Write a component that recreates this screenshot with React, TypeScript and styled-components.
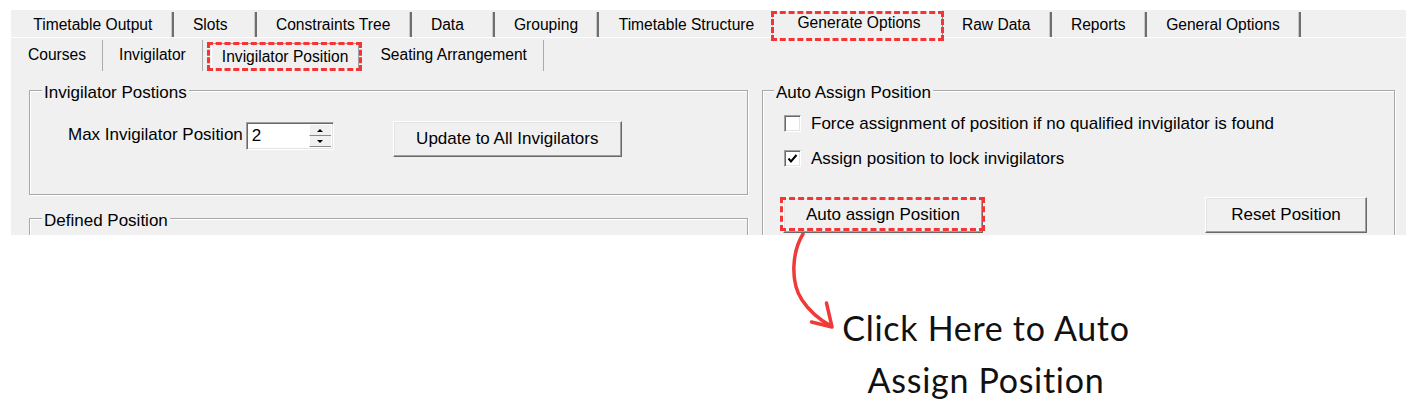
import React from "react";
import styled, { createGlobalStyle, css } from "styled-components";

const GlobalStyle = createGlobalStyle`
  html, body { margin: 0; padding: 0; background: #ffffff; }
  body { font-family: "Liberation Sans", Arial, sans-serif; }
`;

const Page = styled.div`
  width: 1416px;
  height: 415px;
  box-sizing: border-box;
  padding: 10px 0 0 11px;
  overflow: hidden;
`;

const Window = styled.div`
  width: 1395px;
  height: 225px;
  background: #f0f0f0;
  overflow: hidden;
  display: flex;
  flex-direction: column;
  font-family: "Liberation Sans", Arial, sans-serif;
  font-size: 17px;
  color: #000;
`;

const Highlight = styled.span<{ $inset: string }>`
  position: absolute;
  inset: ${(p) => p.$inset};
  border: 3px dashed #f53535;
  pointer-events: none;
  z-index: 2;
`;

const TopTabs = styled.div`
  flex: none;
  display: flex;
  height: 27px;
  padding-left: 3px;
  border-bottom: 1px solid #ffffff;
`;

const TopTab = styled.div<{ $selected?: boolean }>`
  position: relative;
  box-sizing: border-box;
  min-width: 83px;
  margin-top: 2px;
  padding: 1px 19.3px 0;
  display: flex;
  align-items: center;
  white-space: nowrap;
  font-size: 15.6px;
  border-right: 2px solid #6e6e6e;
  box-shadow: inset -1px 0 0 #c8c8c8;
  ${(p) =>
    p.$selected &&
    css`
      margin: 0 0 -4px -2px;
      height: 31px;
      padding: 0 21px 6px 23px;
      border-right: 1px solid #8a8a8a;
      border-left: 1px solid #ffffff;
      border-top: 1px solid #ffffff;
      box-shadow: none;
      background: #f0f0f0;
      z-index: 1;
    `}
`;

const SubTabs = styled.div`
  flex: none;
  display: flex;
  height: 33px;
  padding-left: 1px;
`;

const SubTab = styled.div<{ $selected?: boolean }>`
  position: relative;
  margin-top: 2px;
  padding: 0 16px 1px;
  display: flex;
  align-items: center;
  white-space: nowrap;
  font-size: 15.6px;
  border-right: 1px solid #ababab;
  ${(p) =>
    p.$selected &&
    css`
      margin: 5px 5px 0 8px;
      padding: 0 10px 2px;
      border-top: 1px solid #a0a0a0;
      border-left: 1px solid #ffffff;
      border-right: 1px solid #a0a0a0;
    `}
`;

const Body = styled.div`
  flex: 1;
  display: flex;
  align-items: flex-start;
  gap: 14px;
  padding: 19px 0 0 18px;
`;

const LeftCol = styled.div`
  width: 719px;
  display: flex;
  flex-direction: column;
  gap: 23px;
`;

const GroupBox = styled.div<{ $w?: number; $h: number }>`
  box-sizing: border-box;
  width: ${(p) => (p.$w ? `${p.$w}px` : "100%")};
  height: ${(p) => p.$h}px;
  border: 1px solid #a8a8a8;
  box-shadow: inset 1px 1px 0 #ffffff, 1px 1px 0 #ffffff;
  display: flex;
  flex-direction: column;
  align-items: flex-start;
`;

const Legend = styled.div<{ $left: number }>`
  margin: -7px 0 0 ${(p) => p.$left}px;
  padding: 0 2px;
  line-height: 18px;
  background: #f0f0f0;
  white-space: nowrap;
`;

const FieldRow = styled.div`
  display: flex;
  align-items: flex-start;
  margin-top: 19px;
  padding-left: 38px;
`;

const FieldLabel = styled.span`
  margin-top: 5px;
  line-height: 18px;
  white-space: nowrap;
`;

const Spinner = styled.div`
  box-sizing: border-box;
  display: flex;
  width: 88px;
  height: 28px;
  margin: 1px 0 0 3px;
  border: 1px solid;
  border-color: #a0a0a0 #ffffff #ffffff #a0a0a0;
  box-shadow: inset 1px 1px 0 #696969, inset -1px -1px 0 #e3e3e3;
  background: #ffffff;
`;

const SpinValue = styled.div`
  flex: 1;
  padding-left: 5px;
  line-height: 26px;
  font-size: 17px;
`;

const SpinButtons = styled.div`
  width: 22px;
  display: flex;
  flex-direction: column;
  margin: 2px 2px 2px 0;
`;

const SpinButton = styled.div`
  flex: 1;
  display: flex;
  align-items: center;
  justify-content: center;
  background: #f0f0f0;
  border-bottom: 1px solid #8a8a8a;
  border-left: 1px solid #ffffff;
`;

const Triangle = styled.span<{ $down?: boolean }>`
  width: 0;
  height: 0;
  border-left: 3px solid transparent;
  border-right: 3px solid transparent;
  ${(p) =>
    p.$down
      ? css`border-top: 3px solid #000;`
      : css`border-bottom: 3px solid #000;`}
`;

const WinButton = styled.button<{ $w: number; $ml?: number }>`
  position: relative;
  box-sizing: border-box;
  width: ${(p) => p.$w}px;
  height: 36px;
  margin-left: ${(p) => p.$ml ?? 0}px;
  padding: 0;
  display: flex;
  align-items: center;
  justify-content: center;
  font-family: inherit;
  font-size: 17px;
  color: #000;
  background: #f0f0f0;
  border: 1px solid;
  border-color: #ffffff #696969 #696969 #ffffff;
  box-shadow: inset -1px -1px 0 #a0a0a0, inset 1px 1px 0 #e3e3e3;
  white-space: nowrap;
`;

const CheckRow = styled.div<{ $mt: number }>`
  display: flex;
  align-items: center;
  gap: 10px;
  margin-top: ${(p) => p.$mt}px;
  padding-left: 21px;
  height: 17px;
  white-space: nowrap;
`;

const CheckBox = styled.span`
  box-sizing: border-box;
  width: 17px;
  height: 17px;
  display: flex;
  align-items: center;
  justify-content: center;
  background: #ffffff;
  border: 1px solid;
  border-color: #a0a0a0 #ffffff #ffffff #a0a0a0;
  box-shadow: inset 1px 1px 0 #696969, inset -1px -1px 0 #e3e3e3;
`;

const ButtonRow = styled.div`
  align-self: stretch;
  display: flex;
  justify-content: space-between;
  margin-top: 30px;
  padding: 0 27px 0 20px;
`;

const Callout = styled.div`
  display: flex;
  align-items: flex-start;
  margin-left: 779px;
`;

const Arrow = styled.svg`
  flex: none;
  margin-top: -3px;
  overflow: visible;
`;

const CalloutText = styled.div`
  width: 300px;
  margin: 67px 0 0 -4px;
  font-family: Lato, "Open Sans", sans-serif;
  font-size: 34px;
  font-weight: 400;
  letter-spacing: 0.7px;
  line-height: 52px;
  text-align: center;
  color: #111;
  white-space: nowrap;
`;

const topTabs = [
  "Timetable Output",
  "Slots",
  "Constraints Tree",
  "Data",
  "Grouping",
  "Timetable Structure",
  "Generate Options",
  "Raw Data",
  "Reports",
  "General Options",
];

const subTabs = ["Courses", "Invigilator", "Invigilator Position", "Seating Arrangement"];

export default function App() {
  return (
    <>
      <GlobalStyle />
      <Page>
        <Window>
          <TopTabs>
            {topTabs.map((t) => (
              <TopTab key={t} $selected={t === "Generate Options"}>
                {t}
                {t === "Generate Options" && <Highlight $inset="0 -2px 0 -3px" />}
              </TopTab>
            ))}
          </TopTabs>
          <SubTabs>
            {subTabs.map((t) => (
              <SubTab key={t} $selected={t === "Invigilator Position"}>
                {t}
                {t === "Invigilator Position" && <Highlight $inset="-2px -4px 0 -5px" />}
              </SubTab>
            ))}
          </SubTabs>
          <Body>
            <LeftCol>
              <GroupBox $h={105}>
                <Legend $left={12}>Invigilator Postions</Legend>
                <FieldRow>
                  <FieldLabel>Max Invigilator Position</FieldLabel>
                  <Spinner>
                    <SpinValue>2</SpinValue>
                    <SpinButtons>
                      <SpinButton>
                        <Triangle />
                      </SpinButton>
                      <SpinButton>
                        <Triangle $down />
                      </SpinButton>
                    </SpinButtons>
                  </Spinner>
                  <WinButton $w={229} $ml={59}>
                    Update to All Invigilators
                  </WinButton>
                </FieldRow>
              </GroupBox>
              <GroupBox $h={120}>
                <Legend $left={12}>Defined Position</Legend>
              </GroupBox>
            </LeftCol>
            <GroupBox $w={633} $h={200}>
              <Legend $left={11}>Auto Assign Position</Legend>
              <CheckRow $mt={13}>
                <CheckBox />
                <span>Force assignment of position if no qualified invigilator is found</span>
              </CheckRow>
              <CheckRow $mt={18}>
                <CheckBox>
                  <svg width="11" height="11" viewBox="0 0 11 11">
                    <polyline points="1.5,5.5 4,8.5 9.5,2" fill="none" stroke="#000" strokeWidth="2" />
                  </svg>
                </CheckBox>
                <span>Assign position to lock invigilators</span>
              </CheckRow>
              <ButtonRow>
                <WinButton $w={200}>
                  Auto assign Position
                  <Highlight $inset="-1px -3px 1px -4px" />
                </WinButton>
                <WinButton $w={162}>Reset Position</WinButton>
              </ButtonRow>
            </GroupBox>
          </Body>
        </Window>
        <Callout>
          <Arrow width="50" height="100" viewBox="0 0 50 100">
            <path
              d="M13 2 C 2 20, 0 50, 12 68 C 20 80, 30 88, 41 94"
              fill="none"
              stroke="#f03a3a"
              strokeWidth="3.5"
              strokeLinecap="round"
            />
            <path
              d="M36.5 71 L 42 95 L 21.5 90"
              fill="none"
              stroke="#f03a3a"
              strokeWidth="3.5"
              strokeLinecap="round"
              strokeLinejoin="round"
            />
          </Arrow>
          <CalloutText>
            Click Here to Auto
            <br />
            Assign Position
          </CalloutText>
        </Callout>
      </Page>
    </>
  );
}
